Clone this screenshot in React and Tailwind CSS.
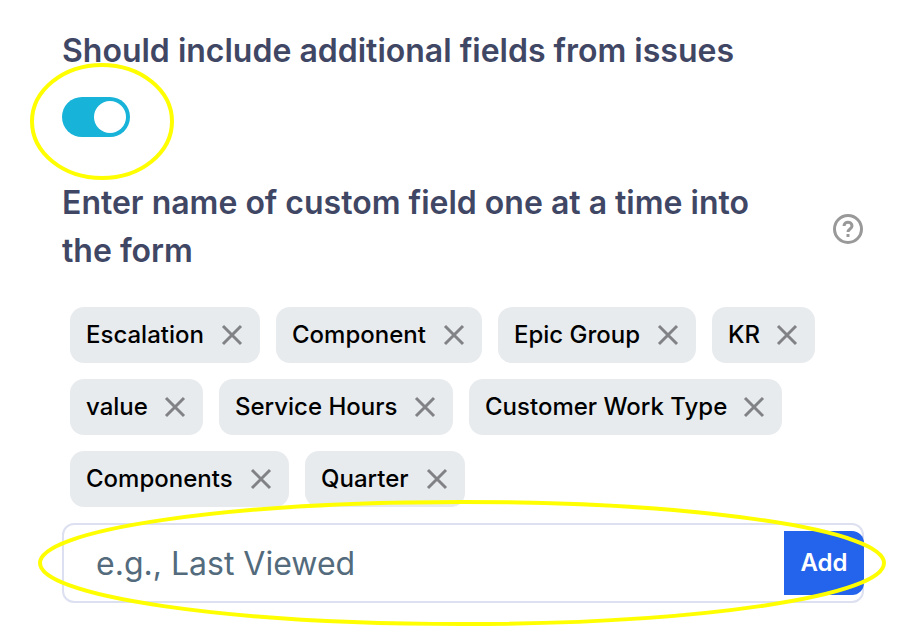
import { useState } from 'react';

const initialFields = [
  { name: 'Escalation', width: 'w-[190px]' },
  { name: 'Component', width: 'w-[206px]' },
  { name: 'Epic Group', width: 'w-[198px]' },
  { name: 'KR', width: 'w-[103px]' },
  { name: 'value', width: 'w-[133px]' },
  { name: 'Service Hours', width: 'w-[234px]' },
  { name: 'Customer Work Type', width: 'w-[313px]' },
  { name: 'Components', width: 'w-[219px]' },
  { name: 'Quarter', width: 'w-[160px]' },
];

function FieldChip({ field, onRemove }) {
  return (
    <div className={`flex h-14 items-center justify-between rounded-[14px] bg-[#e8ebee] pr-4 pl-4 ${field.width}`}>
      <span className="text-[24px] leading-8 font-medium whitespace-nowrap text-black">{field.name}</span>
      <button onClick={onRemove} aria-label="Remove" className="shrink-0">
        <svg className="size-6" viewBox="0 0 24 24" fill="none" stroke="#808285" strokeWidth="3">
          <path d="M3 3l18 18M21 3L3 21" />
        </svg>
      </button>
    </div>
  );
}

export default function App() {
  const [enabled, setEnabled] = useState(true);
  const [fields, setFields] = useState(initialFields);
  const [value, setValue] = useState('');

  const addField = () => {
    if (!value.trim()) return;
    setFields([...fields, { name: value.trim(), width: 'gap-4' }]);
    setValue('');
  };

  return (
    <div className="relative h-[634px] w-[908px] overflow-hidden bg-white font-['Inter',sans-serif]">
      <div className="pt-[27px] pr-11 pl-[62px]">
        <h2 className="text-[32px] leading-[48px] font-semibold whitespace-nowrap text-[#3f4765]">
          Should include additional fields from issues
        </h2>

        <button
          onClick={() => setEnabled(!enabled)}
          className={`mt-[22px] flex h-10 w-[68px] items-center rounded-full p-1 ${enabled ? 'justify-end bg-[#18b3d9]' : 'justify-start bg-gray-300'}`}
        >
          <span className="size-8 rounded-full bg-white" />
        </button>

        <div className="mt-[42px] flex items-center justify-between">
          <h2 className="w-[720px] text-[32px] leading-[48px] font-semibold text-[#3f4765]">
            Enter name of custom field one at a time into the form
          </h2>
          <svg className="mt-1 size-8" viewBox="0 0 32 32" fill="none" stroke="#999" strokeWidth="3">
            <circle cx="16" cy="16" r="13.5" />
            <path d="M12 13c0-5 8-5 8 0 0 3-4 3-4 6M16 21v3" />
          </svg>
        </div>

        {/* Custom fields */}
        <div className="mt-8 ml-2 flex flex-wrap gap-4">
          {fields.map((field, i) => (
            <FieldChip key={field.name} field={field} onRemove={() => setFields(fields.filter((_, n) => n !== i))} />
          ))}
        </div>

        <div className="mt-4 flex h-20 items-center rounded-xl border-2 border-[#dce0f0]">
          <input
            value={value}
            onChange={(e) => setValue(e.target.value)}
            placeholder="e.g., Last Viewed"
            className="h-full min-w-0 flex-1 px-8 text-[32px] outline-none placeholder:text-[#536b7c]"
          />
          <button onClick={addField} className="-mr-0.5 h-16 w-20 rounded-r-xl bg-[#2463eb] text-[24px] font-semibold text-white">
            Add
          </button>
        </div>
      </div>

      {/* Highlights */}
      <svg className="pointer-events-none absolute inset-0" width="908" height="634" fill="none" stroke="#ffff00" strokeWidth="4">
        <ellipse cx="102" cy="121.5" rx="70" ry="56.5" />
        <ellipse cx="462" cy="563" rx="422" ry="61" />
      </svg>
    </div>
  );
}
